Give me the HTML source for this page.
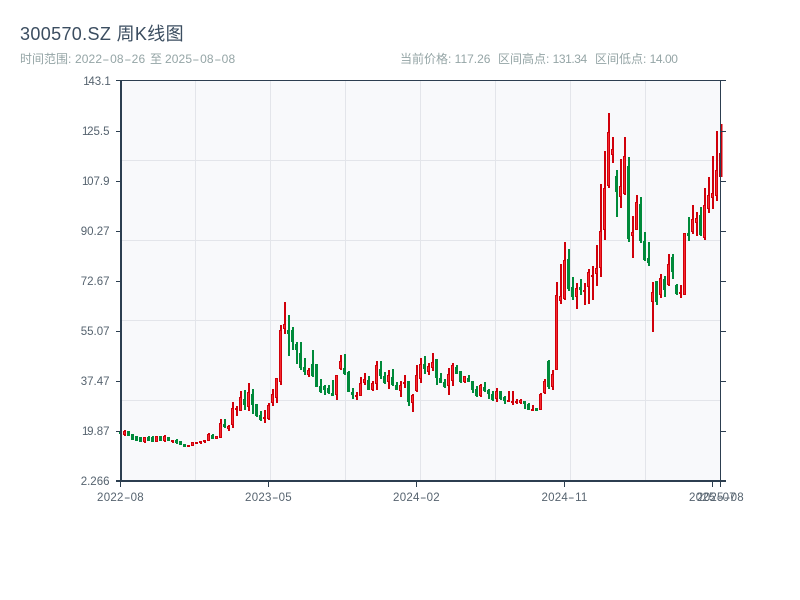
<!DOCTYPE html>
<html><head><meta charset="utf-8"><style>
html,body{margin:0;padding:0;background:#fff;width:800px;height:600px;overflow:hidden}
body{position:relative;font-family:"Liberation Sans","Noto Sans CJK SC",sans-serif}
.t{position:absolute;white-space:nowrap}
.s{position:absolute;top:51px;font-size:12px;line-height:16px;color:#95a5a6;white-space:nowrap}
.d{letter-spacing:.1px}
.h{display:inline-block;width:8px;text-align:center;transform:scaleX(1.8)}
.m{letter-spacing:-.45px}
.y{position:absolute;right:690.5px;font-size:11.5px;line-height:14px;color:#56636f;white-space:nowrap}
.o{letter-spacing:-1.3px}
.x{position:absolute;top:491px;width:80px;text-align:center;font-size:11.5px;line-height:14px;color:#56636f;letter-spacing:.25px}
svg{position:absolute;left:0;top:0}
</style></head><body>
<svg width="800" height="600" id="c" xmlns="http://www.w3.org/2000/svg">
<rect x="121" y="81" width="599" height="400" fill="#f8f9fb"/>
<g fill="#e3e5ea">
<rect x="195" y="81" width="1" height="400"/><rect x="270" y="81" width="1" height="400"/><rect x="345" y="81" width="1" height="400"/><rect x="420" y="81" width="1" height="400"/><rect x="495" y="81" width="1" height="400"/><rect x="570" y="81" width="1" height="400"/><rect x="645" y="81" width="1" height="400"/>
<rect x="121" y="160" width="599" height="1"/><rect x="121" y="240" width="599" height="1"/><rect x="121" y="320" width="599" height="1"/><rect x="121" y="400" width="599" height="1"/>
</g>
<g id="k"></g>
<g fill="#2c3e50">
<rect x="116" y="80" width="610" height="1"/>
<rect x="120" y="80" width="2" height="402"/>
<rect x="116" y="480" width="610" height="2"/>
<rect x="720" y="80" width="1" height="402"/>
<rect x="116" y="131" width="5" height="1"/><rect x="116" y="181" width="5" height="1"/><rect x="116" y="231" width="5" height="1"/><rect x="116" y="281" width="5" height="1"/><rect x="116" y="331" width="5" height="1"/><rect x="116" y="381" width="5" height="1"/><rect x="116" y="431" width="5" height="1"/>
<rect x="720" y="131" width="6" height="1"/><rect x="720" y="181" width="6" height="1"/><rect x="720" y="231" width="6" height="1"/><rect x="720" y="281" width="6" height="1"/><rect x="720" y="331" width="6" height="1"/><rect x="720" y="381" width="6" height="1"/><rect x="720" y="431" width="6" height="1"/>
<rect x="120" y="482" width="1" height="5"/><rect x="268" y="482" width="1" height="5"/><rect x="416" y="482" width="1" height="5"/><rect x="564" y="482" width="1" height="5"/><rect x="712" y="482" width="1" height="5"/><rect x="720" y="482" width="1" height="5"/>
</g>
</svg>
<div class="t" style="left:20px;top:23px;font-size:18px;line-height:22px;color:#3b4d60;letter-spacing:.35px">300570.SZ 周K线图</div>
<div class="s" style="left:20px">时间范围:</div>
<div class="s d" style="left:75px">2022<span class="h">-</span>08<span class="h">-</span>26</div>
<div class="s" style="left:150px">至</div>
<div class="s d" style="left:165px">2025<span class="h">-</span>08<span class="h">-</span>08</div>
<div class="s" style="left:400px">当前价格: 117.26</div>
<div class="s" style="left:498px">区间高点: <span class="m">131.34</span></div>
<div class="s" style="left:595px">区间低点: <span class="m">14.00</span></div>
<div class="y" style="top:75px"><span class="o">1</span>43.<span class="o">1</span></div>
<div class="y" style="top:125px"><span class="o">1</span>25.5</div>
<div class="y" style="top:175px"><span class="o">1</span>07.9</div>
<div class="y" style="top:225px">90.27</div>
<div class="y" style="top:275px">72.67</div>
<div class="y" style="top:325px">55.07</div>
<div class="y" style="top:375px">37.47</div>
<div class="y" style="top:425px"><span class="o">1</span>9.87</div>
<div class="y" style="top:475px">2.266</div>
<div class="x" style="left:80.5px">2022<span class="h" style="width:7px;transform:scaleX(1.7)">-</span>08</div>
<div class="x" style="left:228.5px">2023<span class="h" style="width:7px;transform:scaleX(1.7)">-</span>05</div>
<div class="x" style="left:376.5px">2024<span class="h" style="width:7px;transform:scaleX(1.7)">-</span>02</div>
<div class="x" style="left:524.5px">2024<span class="h" style="width:7px;transform:scaleX(1.7)">-</span>11</div>
<div class="x" style="left:672.5px">2025<span class="h" style="width:7px;transform:scaleX(1.7)">-</span>07</div>
<div class="x" style="left:680.5px">2025<span class="h" style="width:7px;transform:scaleX(1.7)">-</span>08</div>
<script>
var segs=[
[380,"g152,162,152,162 r150,167,153,165 g153,168,153,168 g162,180,162,180 g168,183,168,183 g171,186,171,186 r171,189,171,186 g168,183,171,183 g168,186,171,186 r168,186,168,186 g168,183,168,183 r165,186,168,183 g171,183,171,183 r180,189,180,186 g177,192,180,189 g183,195,183,195 g192,201,192,201 r194,201,195,201 r186,198,186,198 r186,192,186,192 r183,192,183,189 r180,189,180,186 r159,183,162,183 g162,177,165,177 r168,177,168,177 r117,174,129,174 g117,144,132,141 r135,153,138,147 r66,144,84,135 r78,108,84,90 r33,93,51,93 g30,90,57,75 r9,93,36,81 g27,102,42,75 g72,111,72,108 g93,123,105,120 r90,129,111,117 r69,120,75,117"],
[290,"r297,348,312,339 r264,339,264,324 r105,285,120,276 r36,132,102,117 g75,198,120,132 g111,180,120,156 g156,222,162,180 g156,240,189,234 g204,255,231,246 r234,261,240,255 g180,261,222,258 g222,291,222,291 g267,310,288,306 g285,315,288,300 g285,312,294,309 g270,318,309,318 r255,330,255,315 r195,240,213,237 g192,255,234,252 g243,306,246,306 g294,327,306,315 r306,330,315,321 r261,318,279,318 r249,285,267,279 g258,300,270,300 r273,303,279,300 r213,300,225,282 g213,267,237,258 g246,282,258,279 r240,297,255,276 g237,288,261,285 g276,300,285,300 r273,321,285,303 r255,294,276,282 g273,348,273,336"],
[340,"r162,216,165,189 r75,156,105,153 r54,129,72,117 g48,102,72,87 r69,105,78,96 r39,93,66,84 g57,135,57,114 g99,129,114,129 g117,144,126,141 r84,165,102,138 r69,138,75,123 g75,102,81,102 g93,129,93,126 r108,129,108,126 g105,126,114,126 g123,159,123,150 g138,171,147,168 r132,171,135,168 g126,156,141,153 g147,177,150,162 g153,183,162,180 r144,186,153,177 g153,180,153,177 g168,192,171,183 r153,186,180,186 r153,195,183,189 r177,192,183,189 r177,192,180,189 g183,207,183,192 g189,210,192,210 r195,213,207,213 g204,213,204,213 r159,210,162,210 r117,162,123,159 g60,147,63,141 r90,150,102,141"],
[100,"r546,810,585,810 r492,612,588,603 r426,600,480,597 g447,573,477,567 g531,600,561,591 r549,627,564,591 g537,585,561,570 r549,615,570,576 r507,612,516,561 r498,600,525,531 r435,558,504,522 r252,531,393,503 r153,420,264,390 r39,264,96,258 r111,189,147,165 g210,351,228,276 r177,324,258,291 r111,285,168,282 g171,426,198,417 r348,474,396,408 r285,390,306,390 g291,429,312,423 g396,483,423,480 g426,498,474,489 r546,696,576,606 g543,615,543,606 r522,594,534,585 g528,591,537,570 r462,558,492,555 g462,537,471,516 g552,585,555,582 r555,594,576,582 r399,585,399,585 g351,423,399,408 r315,402,357,396 r336,408,354,369 g321,408,345,405 r264,420,315,414 r231,339,285,327 r168,327,279,294 r93,303,210,288"]
];
var s="",i=0;
function R(x,y,w,h,f){return '<rect x="'+x+'" y="'+y+'" width="'+w+'" height="'+h+'" fill="'+f+'"/>';}
segs.forEach(function(a){a[1].split(" ").forEach(function(e){
 var g=e[0]=="g",v=e.slice(1).split(",").map(function(n){return Math.round(a[0]+n/3);});
 var x=120+4*i,c=g?"#008a3a":"#d0000a";
 if(i>0){
 s+=R(x,v[0],2,v[1]-v[0],c);
 var h=Math.max(v[3]-v[2],2);
 s+=R(x-1,v[2],3,h,c);
 if(!g&&h>2)s+=R(x,v[2]+1,1,h-2,"#f52a30");
 }
 i++;
});});
s+=R(119,431,1,3,"#008a3a");
s+=R(721,124,1.5,53,"#d0000a")+R(719,153,1.2,24,"#a0101c");
document.getElementById("k").innerHTML=s;
</script>
</body></html>
